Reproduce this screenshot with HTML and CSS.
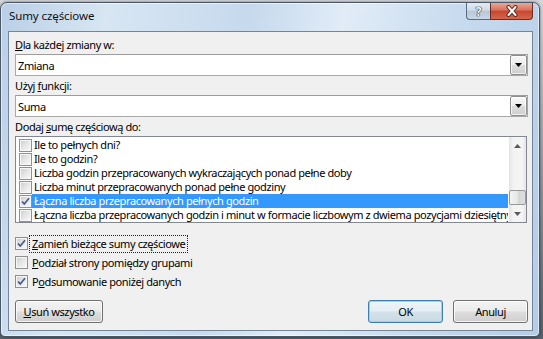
FILE: index.html
```html
<!DOCTYPE html>
<html lang="pl">
	<head>
		<meta charset="utf-8">
		<title>Sumy częściowe</title>
		<link rel="stylesheet" href="styles.css">
	</head>
	<body>
		<div class="window">
			<div class="titlebar">
				<span class="title">Sumy częściowe</span>
				<div class="caption">
					<span class="cap help">?</span>
					<span class="cap close">
						<svg width="14" height="12" viewBox="0 0 14 12">
							<path d="M3.5 2 L10.5 10 M10.5 2 L3.5 10" stroke="#5a2418" stroke-width="4" stroke-linecap="round"/>
							<path d="M3.5 2 L10.5 10 M10.5 2 L3.5 10" stroke="#fff" stroke-width="2" stroke-linecap="round"/>
						</svg>
					</span>
				</div>
			</div>

			<div class="client">
				<label class="lbl"><u>D</u>la każdej zmiany w:</label>
				<div class="combo">
					<span>Zmiana</span>
					<span class="drop"><svg width="7" height="4" viewBox="0 0 7 4"><path d="M0 0 H7 L3.5 4 Z" fill="#000"/></svg></span>
				</div>

				<label class="lbl next">Użyj <u>f</u>unkcji:</label>
				<div class="combo">
					<span>Suma</span>
					<span class="drop"><svg width="7" height="4" viewBox="0 0 7 4"><path d="M0 0 H7 L3.5 4 Z" fill="#000"/></svg></span>
				</div>

				<label class="lbl next">Dodaj <u>s</u>umę częściową do:</label>
				<div class="list">
					<div class="rows">
						<div class="row"><span class="cb"></span><span class="txt">Ile to pełnych dni?</span></div>
						<div class="row"><span class="cb"></span><span class="txt">Ile to godzin?</span></div>
						<div class="row"><span class="cb"></span><span class="txt">Liczba godzin przepracowanych wykraczających ponad pełne doby</span></div>
						<div class="row"><span class="cb"></span><span class="txt">Liczba minut przepracowanych ponad pełne godziny</span></div>
						<div class="row sel">
							<span class="cb"><svg width="11" height="11" viewBox="0 0 11 11"><path d="M2 5.5 L4.3 8 L9 2.3" stroke="#4a5b80" stroke-width="1.7" fill="none"/></svg></span>
							<span class="txt">Łączna liczba przepracowanych pełnych godzin</span>
						</div>
						<div class="row"><span class="cb"></span><span class="txt">Łączna liczba przepracowanych godzin i minut w formacie liczbowym z dwiema pozycjami dziesiętnymi</span></div>
					</div>
					<div class="vscroll">
						<div class="arrow"><svg width="7" height="4" viewBox="0 0 7 4"><path d="M0 4 L3.5 0 L7 4 Z" fill="#5a5a5a"/></svg></div>
						<div class="track"><div class="thumb"></div></div>
						<div class="arrow"><svg width="7" height="4" viewBox="0 0 7 4"><path d="M0 0 H7 L3.5 4 Z" fill="#5a5a5a"/></svg></div>
					</div>
				</div>

				<div class="opts">
					<div class="opt">
						<span class="cb"><svg width="11" height="11" viewBox="0 0 11 11"><path d="M2 5.5 L4.3 8 L9 2.3" stroke="#4a5b80" stroke-width="1.7" fill="none"/></svg></span>
						<span class="lab focus"><u>Z</u>amień bieżące sumy częściowe</span>
					</div>
					<div class="opt">
						<span class="cb"></span>
						<span class="lab"><u>P</u>odział strony pomiędzy grupami</span>
					</div>
					<div class="opt">
						<span class="cb"><svg width="11" height="11" viewBox="0 0 11 11"><path d="M2 5.5 L4.3 8 L9 2.3" stroke="#4a5b80" stroke-width="1.7" fill="none"/></svg></span>
						<span class="lab">P<u>o</u>dsumowanie poniżej danych</span>
					</div>
				</div>

				<div class="btnrow">
					<button class="btn wide"><u>U</u>suń wszystko</button>
					<button class="btn default">OK</button>
					<button class="btn">Anuluj</button>
				</div>
			</div>
		</div>
	</body>
</html>
```

FILE: styles.css
```css
body{
	margin: 0;
	width: 543px;
	height: 339px;
	overflow: hidden;
	background: linear-gradient(#d4d7da, #56616c);
	font-family: "Noto Sans", sans-serif;
	font-size: 11px;
	letter-spacing: -0.4px;
	color: #000;
}
u{
	text-underline-offset: 1px;
}
.window{
	margin-top: 2px;
	width: 540px;
	height: 335px;
	box-sizing: border-box;
	border: 1px solid #4a5767;
	border-radius: 7px 7px 5px 5px;
	background: linear-gradient(100deg, #b9cfe6 0%, #d8e6f3 18%, #c6d9ed 42%, #e1ecf7 58%, #c7daee 78%, #b4cde7 100%);
	box-shadow: inset 0 0 0 1px rgba(255,255,255,.55), 0 0 3px rgba(0,0,0,.5);
	padding: 0 6px 5px 7px;
	display: flex;
	flex-direction: column;
}
.titlebar{
	height: 28px;
	display: flex;
	justify-content: space-between;
	align-items: flex-start;
}
.title{
	padding: 6px 0 0 1px;
	font-size: 11.5px;
	line-height: 14px;
	letter-spacing: -0.1px;
	color: #111;
}
.caption{
	display: flex;
}
.cap{
	height: 17px;
	box-sizing: border-box;
	display: flex;
	align-items: center;
	justify-content: center;
	border: 1px solid #5b6b7d;
	border-top: none;
}
.help{
	width: 24px;
	border-radius: 0 0 0 4px;
	border-right: none;
	background: linear-gradient(#e4ecf4, #cfdbe8 45%, #b7c7d9 50%, #c9d7e6);
	font-weight: bold;
	font-size: 12px;
	letter-spacing: 0;
	color: #f4f7fa;
	text-shadow: 0 0 1px #1f2d3d, 0 0 1px #1f2d3d, 0 0 1px #1f2d3d;
}
.close{
	width: 43px;
	border-radius: 0 0 4px 0;
	border-color: #6a2b20;
	background: linear-gradient(#e9a898, #d9705c 45%, #c9452d 50%, #d4674f);
}
.client{
	flex: 1;
	background: #f0f0f0;
	border: 1px solid #738599;
	padding: 6px 4px 0 6px;
	display: flex;
	flex-direction: column;
}
.lbl{
	display: block;
	height: 14px;
	line-height: 14px;
}
.lbl.next{
	margin-top: 3px;
}
.combo{
	margin-top: 2px;
	height: 22px;
	box-sizing: border-box;
	border: 1px solid #a9a9a9;
	border-top-color: #9c9c9c;
	background: #fff;
	display: flex;
	align-items: center;
	justify-content: space-between;
	padding-left: 2px;
}
.drop{
	width: 17px;
	height: 20px;
	box-sizing: border-box;
	border: 1px solid #8e8e8e;
	border-radius: 2px;
	background: linear-gradient(#f7f7f7, #ececec 48%, #dcdcdc 52%, #cfcfcf);
	box-shadow: inset 0 0 0 1px rgba(255,255,255,.7);
	display: flex;
	align-items: center;
	justify-content: center;
	padding-bottom: 1px;
}
.list{
	margin-top: 2px;
	margin-right: 1px;
	height: 87px;
	box-sizing: border-box;
	border: 1px solid #828790;
	background: #fff;
	display: flex;
}
.rows{
	flex: 1;
	min-width: 0;
	padding-top: 1px;
	overflow: hidden;
}
.row{
	height: 14px;
	display: flex;
	align-items: center;
}
.row .cb{
	margin-left: 3px;
}
.row .txt{
	flex: 1;
	min-width: 0;
	height: 14px;
	line-height: 14px;
	padding-left: 2px;
	margin-right: 1px;
	white-space: nowrap;
	overflow: hidden;
}
.row.sel .txt{
	background: #3399ff;
	color: #fff;
}
.cb{
	width: 13px;
	height: 13px;
	flex: none;
	box-sizing: border-box;
	border: 1px solid #8e8f8f;
	background: linear-gradient(135deg, #c9cacc 0%, #e3e4e5 45%, #fbfbfb 100%);
	box-shadow: inset 0 0 0 1px #f6f6f6;
	display: flex;
	align-items: center;
	justify-content: center;
}
.vscroll{
	width: 17px;
	flex: none;
	display: flex;
	flex-direction: column;
	background: linear-gradient(90deg, #e3e3e3, #f3f3f3 25%, #f5f5f5 75%, #e6e6e6);
}
.arrow{
	height: 17px;
	display: flex;
	align-items: center;
	justify-content: center;
}
.track{
	flex: 1;
	display: flex;
	flex-direction: column;
	justify-content: flex-end;
}
.thumb{
	height: 15px;
	box-sizing: border-box;
	border: 1px solid #999;
	border-radius: 2px;
	background: linear-gradient(90deg, #f4f4f4, #e6e6e6 50%, #d6d6d6 52%, #dedede);
}
.opts{
	margin-top: 11px;
}
.opt{
	height: 19px;
	display: flex;
	align-items: center;
}
.opt .cb{
	margin-right: 1px;
}
.lab{
	border: 1px dotted transparent;
	padding: 0 2px;
	line-height: 16px;
}
.lab.focus{
	border-color: #222;
}
.btnrow{
	margin-top: 9px;
	display: flex;
	gap: 10px;
}
.btn{
	width: 75px;
	height: 23px;
	box-sizing: border-box;
	border: 1px solid #707070;
	border-radius: 3px;
	background: linear-gradient(#f3f3f3, #ebebeb 48%, #dddddd 52%, #cfcfcf);
	box-shadow: inset 0 0 0 1px rgba(255,255,255,.75);
	font: inherit;
	letter-spacing: inherit;
	color: #000;
	padding: 0;
}
.btn.wide{
	width: 88px;
	margin-right: auto;
}
.btn.default{
	border-color: #3c7fb1;
	box-shadow: inset 0 0 0 1px #8fd6f2;
	background: linear-gradient(#eef5f9, #e4eef4 48%, #d4e2ea 52%, #c9d9e3);
}
```
